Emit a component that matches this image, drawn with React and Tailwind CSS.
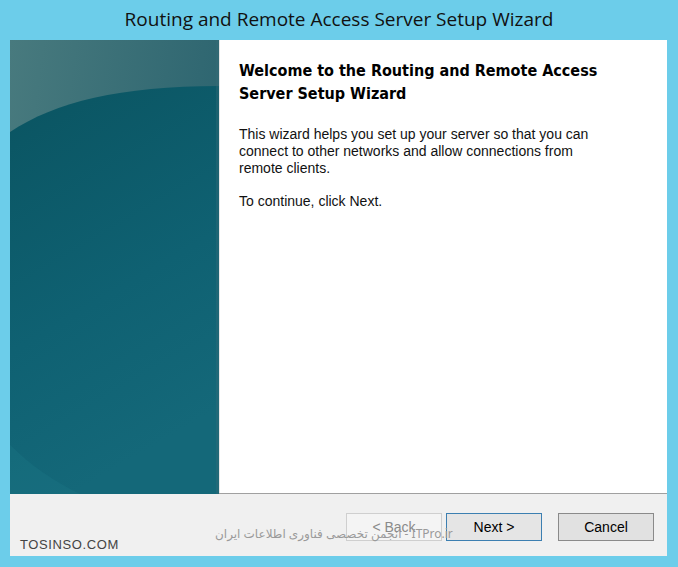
import React from 'react'

const SidePanel = () => (
  <svg width="209" height="454" viewBox="0 0 209 454" preserveAspectRatio="none" className="block">
    <defs>
      <linearGradient id="top" x1="0" y1="0" x2="1" y2="0.3">
        <stop offset="0" stopColor="#487a7e" />
        <stop offset="1" stopColor="#2d6570" />
      </linearGradient>
      <linearGradient id="bottom" x1="0" y1="0" x2="0.3" y2="1">
        <stop offset="0" stopColor="#0a5461" />
        <stop offset="0.6" stopColor="#0f6172" />
        <stop offset="1" stopColor="#146879" />
      </linearGradient>
    </defs>
    <rect width="209" height="454" fill="url(#top)" />
    <path d="M0 92 C 45 62, 110 46, 209 46 L209 454 L0 454 Z" fill="url(#bottom)" />
    <path d="M0 405 C 20 425, 45 442, 70 454 L0 454 Z" fill="#1b7482" opacity="0.45" />
    <rect x="206" width="3" height="454" fill="#3a6e78" opacity="0.35" />
  </svg>
)

const WizardButton = ({ children, primary, disabled }) => (
  <button
    className={
      'w-[96px] h-[28px] text-[14px] border ' +
      (disabled
        ? 'border-[#cfcfcf] text-[#8a8a8a] bg-[#f4f4f4]'
        : primary
          ? 'border-[#3c7fb1] text-black bg-[#e5e5e5]'
          : 'border-[#8a8a8a] text-black bg-[#e1e1e1]')
    }
    style={{ fontFamily: '"Liberation Sans", Arial, sans-serif' }}
  >
    {children}
  </button>
)

const App = () => {
  return (
    <div className="w-[678px] h-[567px] bg-[#6ccdea] flex flex-col overflow-hidden">
      <div
        className="h-[40px] flex items-center justify-center text-[19px] text-[#111] pb-[1px]"
        style={{ fontFamily: '"Open Sans", "Noto Sans", sans-serif' }}
      >
        Routing and Remote Access Server Setup Wizard
      </div>

      <div className="ml-[10px] mr-[11px] flex-1 mb-[11px] flex flex-col bg-[#f0f0f0]">
        {/* main */}
        <div className="flex h-[454px] border-b border-[#a0a0a0]">
          <SidePanel />
          <div className="flex-1 bg-white pl-[19px] pt-[19px] border-l border-[#e6e6e6]">
            <h1
              className="text-[16px] font-bold leading-[23px] text-black"
              style={{ fontFamily: '"DejaVu Sans Condensed", "DejaVu Sans", sans-serif' }}
            >
              Welcome to the Routing and Remote Access
              <br />
              Server Setup Wizard
            </h1>
            <div
              className="mt-[21px] text-[14px] leading-[17px] text-[#111]"
              style={{ fontFamily: '"Liberation Sans", Arial, sans-serif' }}
            >
              <p>
                This wizard helps you set up your server so that you can
                <br />
                connect to other networks and allow connections from
                <br />
                remote clients.
              </p>
              <p className="mt-[16px]">To continue, click Next.</p>
            </div>
          </div>
        </div>

        {/* footer */}
        <div className="relative flex-1 flex justify-end items-start pt-[19px] pr-[13px]">
          <div className="flex gap-[4px]">
            <WizardButton disabled>&lt; Back</WizardButton>
            <WizardButton primary>Next &gt;</WizardButton>
          </div>
          <div className="ml-[16px]">
            <WizardButton>Cancel</WizardButton>
          </div>

          {/* watermarks */}
          <span
            className="absolute left-[10px] top-[44px] text-[13px] leading-[14px] text-[#444] tracking-[0.6px]"
            style={{ fontFamily: '"Liberation Sans", Arial, sans-serif' }}
          >
            TOSINSO.COM
          </span>
          <span
            className="absolute left-[205px] top-[33px] text-[12px] leading-[14px] text-[#9a9a9a]"
            style={{ fontFamily: '"Noto Sans", "DejaVu Sans", sans-serif' }}
          >
            انجمن تخصصی فناوری اطلاعات ایران - ITPro.ir
          </span>
        </div>
      </div>
    </div>
  )
}

export default App
